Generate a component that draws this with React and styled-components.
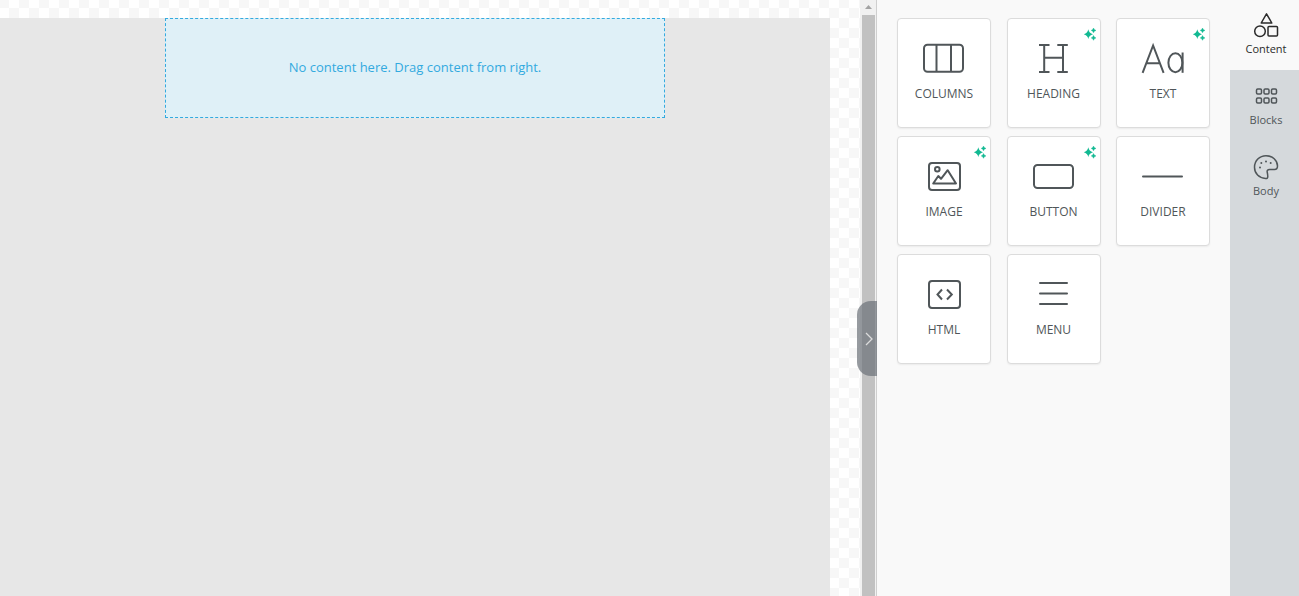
import React, { useState } from "react";
import styled, { createGlobalStyle } from "styled-components";

const GlobalStyle = createGlobalStyle`
  *, *::before, *::after { box-sizing: border-box; }
  body {
    margin: 0;
    font-family: "Open Sans", "Noto Sans", sans-serif;
    background: #f9f9f9;
  }
`;

const Editor = styled.div`
  display: flex;
  min-height: 100vh;
`;

const Canvas = styled.main`
  flex: 1;
  min-width: 0;
  display: flex;
  padding: 18px 30px 0 0;
  background: repeating-conic-gradient(#ffffff 0% 25%, #f7f7f7 0% 50%) -1px -2px / 20px 20px;
`;

const EmailBody = styled.section`
  flex: 1;
  min-width: 0;
  background: #e7e7e7;
`;

const DropZone = styled.div`
  display: flex;
  align-items: center;
  justify-content: center;
  max-width: 500px;
  height: 100px;
  margin: 0 auto;
  padding-bottom: 2px;
  border: 1px dashed #33aadf;
  background: #dff0f7;
  color: #33aadf;
  font-size: 13px;
  line-height: 18px;
`;

const ScrollTrack = styled.div`
  position: relative;
  display: flex;
  flex-direction: column;
  width: 17px;
  padding: 0 2px;
  background: #f1f1f1;
  border-right: 1px solid #cfcfcf;
`;

const ScrollArrow = styled.svg`
  display: block;
  width: 13px;
  height: 15px;
  flex: none;
`;

const ScrollThumb = styled.div`
  flex: 1;
  width: 13px;
  background: #c1c1c1;
`;

const CollapseButton = styled.button`
  position: absolute;
  top: 301px;
  right: -1px;
  display: flex;
  align-items: center;
  justify-content: center;
  width: 20px;
  height: 75px;
  padding: 0 0 0 4px;
  border: 0;
  border-radius: 14px 0 0 14px;
  background: rgba(107, 113, 119, 0.7);
  color: #dcdcdc;
`;

const ToolPanel = styled.section`
  width: 353px;
  flex: none;
  padding: 18px 20px;
  background: #f9f9f9;
`;

const ToolGrid = styled.div`
  display: grid;
  grid-template-columns: repeat(3, 94px);
  justify-content: space-between;
  row-gap: 8px;
`;

const ToolCard = styled.button`
  position: relative;
  display: flex;
  flex-direction: column;
  align-items: center;
  height: 110px;
  padding: 19px 0 0;
  border: 1px solid #dcdcdc;
  border-radius: 4px;
  background: #ffffff;
  box-shadow: 0 1px 2px rgba(0, 0, 0, 0.06);
  color: #505659;
  font-family: inherit;
  font-size: 12px;
  line-height: 18px;
  cursor: grab;
`;

const ToolIcon = styled.svg`
  display: block;
  width: 44px;
  height: 40px;
  margin-bottom: 7px;
  fill: none;
  stroke: currentColor;
  stroke-width: 2;
`;

const Sparkle = styled.svg`
  position: absolute;
  top: 9px;
  right: 4px;
  width: 13px;
  height: 13px;
  fill: #12b992;
`;

const Tabs = styled.nav`
  width: 69px;
  flex: none;
  background: #d5d9dc;
`;

const Tab = styled.button`
  display: flex;
  flex-direction: column;
  align-items: center;
  width: 100%;
  height: ${({ $active }) => ($active ? 70 : 71)}px;
  padding: ${({ $active }) => ($active ? 11 : 12)}px 0 0 3px;
  border: 0;
  background: ${({ $active }) => ($active ? "#f9f9f9" : "transparent")};
  color: ${({ $active }) => ($active ? "#2b2b2b" : "#505659")};
  font-family: inherit;
  font-size: 11px;
  line-height: 16px;
  cursor: pointer;
`;

const TabIcon = styled.svg`
  display: block;
  width: 28px;
  height: 28px;
  margin-bottom: 2px;
  fill: none;
  stroke: currentColor;
  stroke-width: 1.5;
`;

const tools = [
  {
    label: "COLUMNS",
    art: (
      <>
        <rect x="2" y="6.8" width="39" height="27" rx="3.5" />
        <path d="M14.5 7v27M29 7v27" />
      </>
    ),
  },
  {
    label: "HEADING",
    ai: true,
    art: <path d="M7 7h10.500M25.300 7h10.500M7 34h10.500M25.300 34h10.500M12.200 7v27M31 7v27M12.200 19.700h19" />,
  },
  {
    label: "TEXT",
    ai: true,
    art: (
      <>
        <path d="M1.600 34.800L12.100 7.500 22.600 34.800M5.400 25.200h13.400" />
        <ellipse cx="34.400" cy="24.700" rx="7" ry="9.500" />
        <path d="M41.600 14.500v20.300" />
      </>
    ),
  },
  {
    label: "IMAGE",
    ai: true,
    art: (
      <>
        <rect x="7" y="7" width="31" height="27" rx="3" />
        <circle cx="15.300" cy="13.200" r="2.300" />
        <path d="M11.200 27.500L16.300 20 19 22.800 25.700 14.200 34 27.500z" strokeLinejoin="round" />
      </>
    ),
  },
  {
    label: "BUTTON",
    ai: true,
    art: <rect x="2" y="9" width="39" height="23" rx="3.500" />,
  },
  { label: "DIVIDER", art: <path d="M2 20.500h39" strokeLinecap="round" /> },
  {
    label: "HTML",
    art: (
      <>
        <rect x="7" y="7" width="31" height="27" rx="3" />
        <path d="M20 15.500L15.500 20.500 20 25.500M25 15.500L29.800 20.500 25 25.500" />
      </>
    ),
  },
  { label: "MENU", art: <path d="M8 9h27M8 19.500h27M8 30h27" strokeLinecap="round" /> },
];

const tabs = [
  {
    label: "Content",
    art: (
      <>
        <path d="M14.500 2.800L19.800 12H9.200z" strokeLinejoin="round" />
        <circle cx="8" cy="20.300" r="5.300" />
        <rect x="16" y="15.600" width="9.500" height="9.500" rx="1" />
      </>
    ),
  },
  {
    label: "Blocks",
    art: [7, 16].map((y) =>
      [4.5, 12, 19.5].map((x) => (
        <rect key={`${x}-${y}`} x={x} y={y} width="5" height="5" rx="1.200" />
      ))
    ),
  },
  {
    label: "Body",
    art: (
      <>
        <path
          d="M14 2.700C20.500 2.700 25.500 7.500 25.500 13C25.500 15.500 24.700 16.500 22.500 16.500H17.500C15.600 16.500 14.900 17.500 15.200 19C15.500 20.500 15.800 22 15.800 23.500C15.800 25 15.200 25.600 13.500 25.500C7 25 2.500 20.500 2.500 14.200C2.500 7.800 7.500 2.700 14 2.700Z"
          strokeLinejoin="round"
        />
        <g fill="currentColor" stroke="none">
          <circle cx="8" cy="14.500" r="1" />
          <circle cx="9.300" cy="10" r="1" />
          <circle cx="14" cy="8.500" r="1" />
          <circle cx="18.700" cy="10" r="1" />
        </g>
      </>
    ),
  },
];

function AiMark() {
  return (
    <Sparkle viewBox="0 0 13 13" aria-hidden="true">
      <path d="M5.300 1.300Q6 5.300 10 6.200 6 7.100 5.300 11.100 4.600 7.100 .8 6.200 4.600 5.300 5.300 1.300Z" />
      <path d="M10.500 0Q10.900 1.900 13 2.400 10.900 2.900 10.500 4.800 10.100 2.900 8.200 2.400 10.100 1.900 10.500 0ZM10.500 7.500Q10.900 9.400 13 9.900 10.900 10.400 10.500 12.300 10.100 10.400 8.200 9.900 10.100 9.400 10.500 7.500Z" stroke="#12b992" strokeWidth=".4" />
    </Sparkle>
  );
}

export default function App() {
  const [active, setActive] = useState("Content");

  return (
    <>
      <GlobalStyle />
      <Editor>
        <Canvas>
          <EmailBody>
            <DropZone>No content here. Drag content from right.</DropZone>
          </EmailBody>
        </Canvas>
        <ScrollTrack>
          <ScrollArrow viewBox="0 0 13 15" aria-hidden="true">
            <path d="M3 9L6.500 5 10 9z" fill="#a3a3a3" />
          </ScrollArrow>
          <ScrollThumb />
          <CollapseButton aria-label="Collapse panel">
            <svg width="8" height="14" viewBox="0 0 8 14" fill="none" stroke="currentColor" strokeWidth="1.300">
              <path d="M1 1l6 6-6 6" />
            </svg>
          </CollapseButton>
        </ScrollTrack>
        <ToolPanel>
          <ToolGrid>
            {tools.map(({ label, art, ai }) => (
              <ToolCard key={label}>
                <ToolIcon viewBox="0 0 44 40" aria-hidden="true">{art}</ToolIcon>
                {label}
                {ai && <AiMark />}
              </ToolCard>
            ))}
          </ToolGrid>
        </ToolPanel>
        <Tabs>
          {tabs.map(({ label, art }) => (
            <Tab key={label} $active={active === label} onClick={() => setActive(label)}>
              <TabIcon viewBox="0 0 28 28" aria-hidden="true">{art}</TabIcon>
              {label}
            </Tab>
          ))}
        </Tabs>
      </Editor>
    </>
  );
}
